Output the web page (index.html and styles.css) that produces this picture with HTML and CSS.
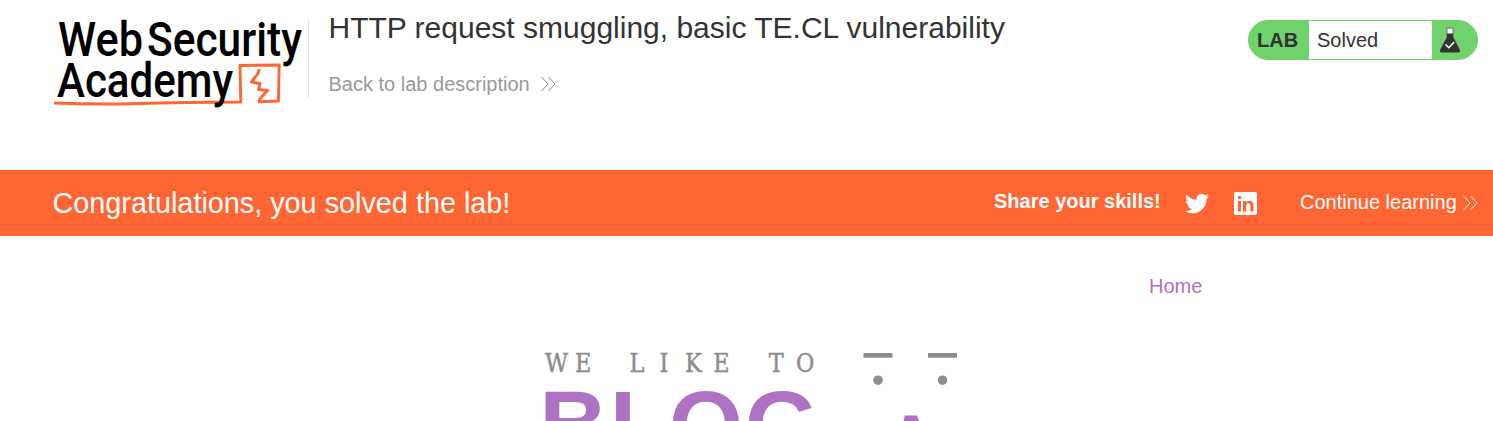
FILE: index.html
```html
<!DOCTYPE html>
<html lang="en">
<head>
<meta charset="utf-8">
<title>HTTP request smuggling, basic TE.CL vulnerability</title>
<link rel="stylesheet" href="styles.css">
</head>
<body>
<header class="lab-header">
  <svg class="logo" width="256" height="100" viewBox="50 10 256 100" role="img" aria-label="Web Security Academy">
    <path d="M54 103Q90 104.500 130 103.800Q190 102 240.800 102L240 65.500L279.200 65L278.400 101L258 101.800" fill="none" stroke="#ff6633" stroke-width="2.900" stroke-linejoin="round"/>
    <path d="M259 69C259.500 74 254 77.500 251.500 82L260 83.500L258.500 89.500L267.500 90.500Q262 96 258.500 101" fill="none" stroke="#ff6633" stroke-width="3" stroke-linejoin="round"/>
    <g class="logo-text">
      <text x="58" y="56" textLength="85" lengthAdjust="spacingAndGlyphs">Web</text>
      <text x="147" y="56" textLength="155" lengthAdjust="spacingAndGlyphs">Security</text>
      <text x="57" y="97" textLength="176" lengthAdjust="spacingAndGlyphs">Academy</text>
    </g>
  </svg>
  <div class="title-block">
    <h1 class="title">HTTP request smuggling, basic TE.CL vulnerability</h1>
    <a class="back">Back to lab description
      <svg class="chevrons" width="15" height="16" viewBox="0 0 15 16"><path d="M.500 1L7 8L.500 15M7.500 1L14 8L7.500 15"/></svg>
    </a>
  </div>
  <div class="status">
    <span class="status-label">LAB</span>
    <span class="status-value">Solved</span>
    <svg class="flask" width="22" height="26" viewBox="0 0 22 26">
      <path d="M8 1.500V7H14V1.500Z" fill="#fff"/>
      <path d="M7 1H15M8 1.500V8M14 1.500V8" fill="none" stroke="#777" stroke-width="1"/>
      <path d="M7.800 6.500H14.200V10L20.500 22Q22 25.500 19.500 25.500H2.500Q0 25.500 1.500 22L7.800 10Z" fill="#333332"/>
      <path d="M6.500 17.500L9.800 20.700L15.200 15" fill="none" stroke="#fff" stroke-width="1.600"/>
    </svg>
  </div>
</header>
<section class="banner">
  <div class="congrats">Congratulations, you solved the lab!</div>
  <div class="share">Share your skills!</div>
  <svg class="twitter" width="24" height="21" viewBox="0 2 24 20"><path fill="#fff" d="M23.953 4.570a10 10 0 01-2.825.775 4.958 4.958 0 002.163-2.723c-.951.555-2.005.959-3.127 1.184a4.920 4.920 0 00-8.384 4.482C7.690 8.095 4.067 6.130 1.640 3.162a4.822 4.822 0 00-.666 2.475c0 1.710.870 3.213 2.188 4.096a4.904 4.904 0 01-2.228-.616v.060a4.923 4.923 0 003.946 4.827 4.996 4.996 0 01-2.212.085 4.936 4.936 0 004.604 3.417 9.867 9.867 0 01-6.102 2.105c-.390 0-.779-.023-1.170-.067a13.995 13.995 0 007.557 2.209c9.053 0 13.998-7.496 13.998-13.985 0-.210 0-.420-.015-.630A9.935 9.935 0 0024 4.590z"/></svg>
  <svg class="linkedin" width="23" height="23" viewBox="0 0 23 23"><rect width="23" height="23" rx="2" fill="#fff"/><path fill="#ff6633" d="M4 9H7V19.500H4ZM9 9H12V10.500C13.300 8.200 19.500 7.400 19.500 13V19.500H16.400V13.800C16.400 10.400 12.200 10.700 12.200 13.800V19.500H9Z"/><circle cx="5.500" cy="5.500" r="1.800" fill="#ff6633"/></svg>
  <a class="continue">Continue learning</a>
  <svg class="chevrons chevrons-light" width="15" height="16" viewBox="0 0 15 16"><path d="M.500 1L7 8L.500 15M7.500 1L14 8L7.500 15"/></svg>
</section>
<nav class="nav"><a>Home</a></nav>
<svg class="blog-art" width="420" height="81" viewBox="540 340 420 81">
  <g class="tagline" transform="translate(546 372) scale(.88 1)">
    <text x="-1 33">WE</text>
    <text x="95 129 158 190">LIKE</text>
    <text x="253 284">TO</text>
  </g>
  <text class="blog-word" x="539.200 609.700 669 745" y="457">BLOG</text>
  <path d="M863.500 353H892.500V357.700H863.500ZM928 353H957V357.700H928Z" fill="#8c8d8d"/>
  <circle cx="878" cy="380.200" r="4.800" fill="#8c8d8d"/>
  <circle cx="942.500" cy="380.200" r="4.800" fill="#8c8d8d"/>
  <path d="M904.800 415.500H917L919 421H903.500Z" fill="#ad73c2"/>
</svg>
</body>
</html>
```
FILE: styles.css
```css
* { box-sizing: border-box; }
body { margin: 0; height: 421px; overflow: hidden; background: #fff; color: #333332; font-family: "Liberation Sans", Arial, sans-serif; }
.lab-header { display: flex; align-items: flex-start; height: 170px; padding: 10px 15px 0 50px; }
.logo { flex: none; display: block; overflow: visible; }
.logo-text { font: 500 47.500px Roboto, sans-serif; fill: #000; }
.title-block { flex: 1; height: 78px; margin: 10px 0 0 2px; padding-left: 19.500px; border-left: 1px solid #e3e3e3; white-space: nowrap; }
.title { margin: -9px 0 0; font-size: 30px; line-height: 34px; font-weight: 400; }
.back { display: flex; align-items: center; gap: 11px; margin-top: 27px; color: #999; font-size: 20px; line-height: 24px; }
.chevrons { flex: none; fill: none; stroke: #888; stroke-width: 1; }
.chevrons-light { stroke: #fff; margin-left: 6px; }
.status { display: flex; align-items: center; width: 230px; height: 40px; margin-top: 10px; border: 1px solid #70d26c; border-radius: 20px; background: #70d26c; overflow: hidden; font-size: 20px; }
.status-label { width: 60px; padding-left: 8px; font-weight: 700; }
.status-value { width: 123px; height: 38px; padding-left: 8px; background: #fff; line-height: 38px; }
.flask { margin-left: 7px; }
.banner { display: flex; align-items: center; height: 66px; padding: 0 15px 0 52.500px; background: #ff6633; color: #fff; white-space: nowrap; }
.congrats { flex: 1; font-size: 28.800px; }
.share { width: 191px; margin-top: -4px; font-size: 20px; font-weight: 700; }
.linkedin { margin-left: 25px; }
.continue { width: 157px; margin-left: 43px; margin-top: -2px; font-size: 20px; }
.nav { height: 104px; padding: 38px 0 0 1149px; color: #ad73c2; font-size: 20px; line-height: 24px; }
.blog-art { display: block; margin-left: 540px; }
.tagline { font: 25.500px "DejaVu Serif", serif; fill: #8c8d8d; stroke: #8c8d8d; stroke-width: .5; }
.blog-word { font: 700 95px "Liberation Sans", Arial, sans-serif; fill: #ad73c2; }
```
